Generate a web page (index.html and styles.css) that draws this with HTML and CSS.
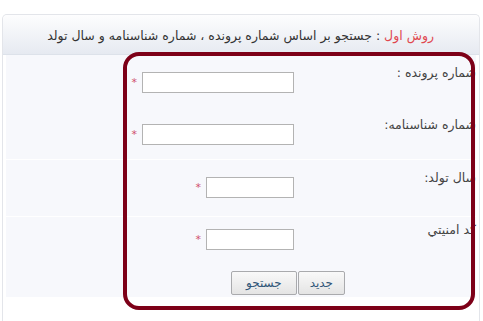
FILE: index.html
```html
<!DOCTYPE html>
<html lang="fa" dir="rtl">
    <head>
        <meta charset="UTF-8">
        <title>جستجو</title>
        <link rel="stylesheet" href="styles.css">
    </head>
    <body>
        <div class="panel">
            <div class="panel-head">
                <span class="head-red">روش اول</span> : جستجو بر اساس شماره پرونده ، شماره شناسنامه و سال تولد
            </div>
            <form class="search-form">
                <div class="row">
                    <label class="lbl">شماره پرونده :</label>
                    <div class="field"><input type="text" class="txt"><span class="req">*</span></div>
                </div>
                <div class="row row-2">
                    <label class="lbl">شماره شناسنامه:</label>
                    <div class="field"><input type="text" class="txt"><span class="req">*</span></div>
                </div>
                <div class="row row-3">
                    <label class="lbl">سال تولد:</label>
                    <div class="field"><input type="text" class="txt txt-short"><span class="req">*</span></div>
                </div>
                <div class="row row-4">
                    <label class="lbl">کد امنيتي</label>
                    <div class="field"><input type="text" class="txt txt-short"><span class="req">*</span></div>
                </div>
                <div class="buttons">
                    <button type="button" class="btn btn-new">جديد</button>
                    <button type="button" class="btn">جستجو</button>
                </div>
            </form>
        </div>
        <div class="highlight"></div>
    </body>
</html>
```

FILE: styles.css
```css
* {
    margin: 0;
    padding: 0;
    box-sizing: border-box;
}

body {
    position: relative;
    background-color: #ffffff;
    font-family: "DejaVu Sans", sans-serif;
    font-size: 12px;
    color: #333;
    height: 321px;
    overflow: hidden;
}

.panel {
    margin: 14px 3px 0 2px;
    border: 1px solid #e3e5ea;
    border-bottom: none;
    border-radius: 5px 5px 0 0;
    height: 307px;
}

.panel-head {
    height: 40px;
    padding-right: 45px;
    line-height: 42px;
    font-size: 12.5px;
    background: linear-gradient(#fdfdfe, #e6eaf1);
    border-bottom: 1px solid #dde2ea;
    border-radius: 5px 5px 0 0;
    color: #333;
    white-space: nowrap;
}

.head-red {
    color: #e0474f;
}

.search-form {
    margin: 0 3px;
    background-color: #f7f8fc;
    height: 242px;
}

.row {
    display: grid;
    grid-template-columns: 182px 1fr;
    height: 52px;
}

.row-2 {
    height: 53px;
    border-bottom: 1px solid #ffffff;
}

.row-3 {
    height: 57px;
    border-bottom: 1px solid #ffffff;
}

.row-4 {
    height: 45px;
}

.lbl {
    padding-top: 10px;
    font-size: 12.5px;
    line-height: 16px;
    color: #444;
    white-space: nowrap;
}

.row-4 .lbl {
    padding-top: 5px;
}

.field {
    display: flex;
    align-items: center;
    padding-top: 17px;
    align-self: start;
}

.row-4 .field {
    padding-top: 12px;
}

.txt {
    width: 152px;
    height: 21px;
    border: 1px solid #b3b3b3;
    background-color: #ffffff;
}

.txt-short {
    width: 88px;
}

.req {
    margin-right: 5px;
    color: #d0506e;
    font-size: 11px;
    line-height: 11px;
}

.buttons {
    display: flex;
    gap: 1px;
    padding-top: 9px;
    padding-right: 131px;
}

.btn {
    height: 24px;
    padding: 0 14px;
    border: 1px solid #a9aaad;
    border-radius: 2px;
    background: linear-gradient(#f9f9f9, #e4e4e4);
    font-family: "DejaVu Sans", sans-serif;
    font-size: 12px;
    color: #2f5678;
}

.btn-new {
    padding: 0 11px;
}

.highlight {
    position: absolute;
    left: 123px;
    top: 52px;
    width: 352px;
    height: 258px;
    border: 4px solid #7d0018;
    border-radius: 16px;
}
```
